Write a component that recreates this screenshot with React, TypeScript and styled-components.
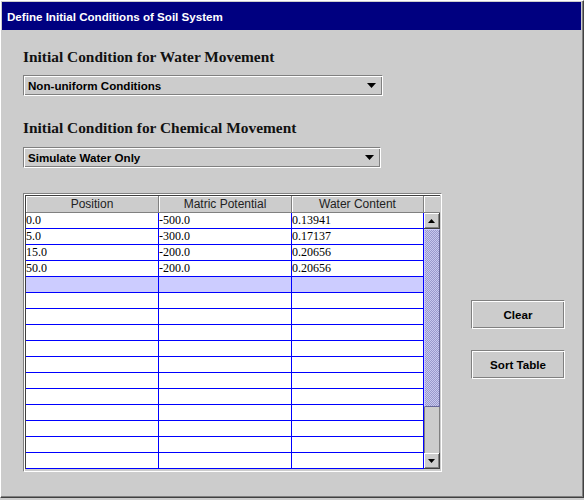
import React from "react";
import styled, { createGlobalStyle } from "styled-components";

const Global = createGlobalStyle`
  html, body { margin: 0; padding: 0; background: #cccccc; }
  #root { width: 584px; height: 500px; }
`;

const Window = styled.div`
  box-sizing: border-box;
  width: 584px;
  height: 498px;
  background: #cccccc;
  border-style: solid;
  border-width: 1px;
  border-color: #ffffff #404040 #404040 #ffffff;
  box-shadow: inset -1px -1px 0 #808080;
  padding: 1px 2px 2px 1px;
  display: flex;
  flex-direction: column;
`;

const TitleBar = styled.div`
  box-sizing: border-box;
  flex: none;
  height: 28px;
  background: #000080;
  color: #ffffff;
  font: bold 11.6px "Liberation Sans", Arial, sans-serif;
  display: flex;
  align-items: center;
  padding: 0 0 0 5px;
`;

const Body = styled.div`
  display: flex;
  padding-left: 21px;
`;

const LeftColumn = styled.div`
  width: 419px;
  display: flex;
  flex-direction: column;
`;

const RightColumn = styled.div`
  display: flex;
  flex-direction: column;
  gap: 21px;
  padding: 270px 0 0 29px;
`;

const Heading = styled.h2<{ $top: number }>`
  margin: ${(p) => p.$top}px 0 0;
  font: bold 15.4px/18px "Liberation Serif", "Times New Roman", serif;
  color: #111111;
  white-space: nowrap;
`;

const Combo = styled.div<{ $top: number; $width: number }>`
  box-sizing: border-box;
  margin-top: ${(p) => p.$top}px;
  width: ${(p) => p.$width}px;
  height: 21px;
  border: 1px solid;
  border-color: #808080 #ffffff #ffffff #808080;
  box-shadow: inset 1px 1px 0 #ffffff, inset -1px -1px 0 #808080;
  background: #cccccc;
  display: flex;
  align-items: center;
  justify-content: space-between;
  padding: 0 6px 0 4px;
  font: bold 11.6px "Liberation Sans", Arial, sans-serif;
  color: #000000;
`;

const TableFrame = styled.div`
  box-sizing: border-box;
  margin-top: 25px;
  width: 419px;
  border: 1px solid;
  border-color: #808080 #ffffff #ffffff #808080;
  box-shadow: inset 1px 1px 0 #ffffff;
  padding: 1px 1px 2px 1px;
`;

const Pane = styled.div`
  display: flex;
  border-left: 1px solid #404040;
  border-top: 1px solid #404040;
`;

const Grid = styled.div`
  display: grid;
  grid-template-columns: 133px 133px 132px;
  grid-auto-rows: 16px;
  grid-template-rows: 17px;
  background: #ffffff;
`;

const HeaderCell = styled.div`
  box-sizing: border-box;
  background: #cccccc;
  border-right: 1px solid #808080;
  border-bottom: 1px solid #808080;
  box-shadow: inset 1px 1px 0 #ffffff;
  font: 12px/16px "Liberation Sans", Arial, sans-serif;
  color: #222222;
  text-align: center;
`;

const Cell = styled.div<{ $selected: boolean }>`
  box-sizing: border-box;
  background: ${(p) => (p.$selected ? "#ccccff" : "#ffffff")};
  border-right: 1px solid #0000ff;
  border-bottom: 1px solid #0000ff;
  font: 12px/15px "Liberation Serif", "Times New Roman", serif;
  color: #000000;
  padding-left: 0;
  white-space: nowrap;
  overflow: hidden;
`;

const ScrollBar = styled.div`
  width: 16px;
  display: flex;
  flex-direction: column;
  background: #cccccc;
`;

const Corner = styled.div`
  box-sizing: border-box;
  height: 17px;
  border-bottom: 1px solid #808080;
  box-shadow: inset 1px 1px 0 #ffffff;
`;

const ArrowButton = styled.div`
  box-sizing: border-box;
  height: 16px;
  background: #cccccc;
  border-right: 1px solid #404040;
  border-bottom: 1px solid #404040;
  box-shadow: inset 1px 1px 0 #ffffff, inset -1px -1px 0 #808080;
  display: flex;
  align-items: center;
  justify-content: center;
`;

const Thumb = styled.div`
  box-sizing: border-box;
  height: 178px;
  border: 1px solid;
  border-color: #ccccff #666699 #666699 #ccccff;
  background-color: #9999cc;
  background-image: repeating-conic-gradient(#c8c8ee 0 25%, #9999cc 0 50%);
  background-size: 2px 2px;
`;

const Track = styled.div`
  flex: 1;
  background: #cccccc;
  border-left: 1px solid #808080;
  border-right: 1px solid #808080;
`;

const Button = styled.button`
  box-sizing: border-box;
  width: 94px;
  height: 29px;
  margin: 0;
  padding: 0;
  background: #cccccc;
  border: 1px solid;
  border-color: #808080 #ffffff #ffffff #808080;
  box-shadow: inset 1px 1px 0 #ffffff, inset -1px -1px 0 #808080;
  font: bold 11.6px "Liberation Sans", Arial, sans-serif;
  color: #000000;
`;

const DownArrow = ({ w = 9, h = 5 }: { w?: number; h?: number }) => (
  <svg width={w} height={h} viewBox={`0 0 ${w} ${h}`}>
    <polygon points={`0,0 ${w},0 ${w / 2},${h}`} fill="#000" />
  </svg>
);

const UpArrow = ({ w = 7, h = 4 }: { w?: number; h?: number }) => (
  <svg width={w} height={h} viewBox={`0 0 ${w} ${h}`}>
    <polygon points={`0,${h} ${w},${h} ${w / 2},0`} fill="#000" />
  </svg>
);

const headers = ["Position", "Matric Potential", "Water Content"];
const data: string[][] = [
  ["0.0", "-500.0", "0.13941"],
  ["5.0", "-300.0", "0.17137"],
  ["15.0", "-200.0", "0.20656"],
  ["50.0", "-200.0", "0.20656"],
];
const ROWS = 16;
const SELECTED = 4;

export default function App() {
  const rows = Array.from({ length: ROWS }, (_, i) => data[i] ?? ["", "", ""]);
  return (
    <>
      <Global />
      <Window>
        <TitleBar>Define Initial Conditions of Soil System</TitleBar>
        <Body>
          <LeftColumn>
            <Heading $top={18}>Initial Condition for Water Movement</Heading>
            <Combo $top={9} $width={360}>
              <span>Non-uniform Conditions</span>
              <DownArrow />
            </Combo>
            <Heading $top={23}>Initial Condition for Chemical Movement</Heading>
            <Combo $top={10} $width={358}>
              <span>Simulate Water Only</span>
              <DownArrow />
            </Combo>
            <TableFrame>
              <Pane>
                <Grid>
                  {headers.map((h) => (
                    <HeaderCell key={h}>{h}</HeaderCell>
                  ))}
                  {rows.map((r, i) =>
                    r.map((v, j) => (
                      <Cell key={`${i}-${j}`} $selected={i === SELECTED}>
                        {v}
                      </Cell>
                    ))
                  )}
                </Grid>
                <ScrollBar>
                  <Corner />
                  <ArrowButton>
                    <UpArrow />
                  </ArrowButton>
                  <Thumb />
                  <Track />
                  <ArrowButton>
                    <DownArrow w={7} h={4} />
                  </ArrowButton>
                </ScrollBar>
              </Pane>
            </TableFrame>
          </LeftColumn>
          <RightColumn>
            <Button>Clear</Button>
            <Button>Sort Table</Button>
          </RightColumn>
        </Body>
      </Window>
    </>
  );
}
